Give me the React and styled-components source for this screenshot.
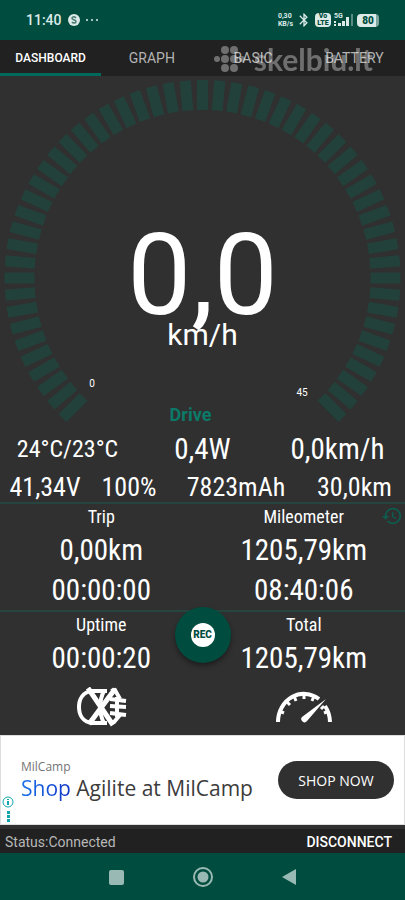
import React from "react";
import styled, { createGlobalStyle } from "styled-components";
import { MdHistory, MdBluetooth } from "react-icons/md";

const GlobalStyle = createGlobalStyle`
  * {
    box-sizing: border-box;
  }

  body {
    margin: 0;
    background: #303030;
    font-family: Roboto, "Liberation Sans", sans-serif;
  }

  button {
    border: 0;
    padding: 0;
    background: none;
    font-family: inherit;
    cursor: pointer;
  }
`;

const Screen = styled.div`
  display: flex;
  flex-direction: column;
  min-height: 100vh;
  background: #303030;
  color: #ffffff;
`;

const StatusBar = styled.header`
  display: flex;
  align-items: center;
  justify-content: space-between;
  height: 40px;
  padding: 0 26px;
  background: #004d40;
  color: #dcebe8;
`;

const StatusGroup = styled.div`
  display: flex;
  align-items: center;
  gap: ${props => props.$gap}px;
`;

const Clock = styled.span`
  font-size: 14px;
  line-height: 20px;
  font-weight: 500;
`;

const NetSpeed = styled.span`
  display: flex;
  flex-direction: column;
  font-size: 7px;
  line-height: 8px;
  font-weight: 700;
`;

const Volte = styled.span`
  display: flex;
  flex-direction: column;
  align-items: center;
  width: 16px;
  border-radius: 4px;
  background: #dcebe8;
  color: #004d40;
  font-size: 7px;
  line-height: 7px;
  font-weight: 900;
`;

const Battery = styled.span`
  width: 22px;
  border-radius: 4px;
  background: linear-gradient(90deg, #dcebe8 85%, #7fa59f 85%);
  color: #004d40;
  font-size: 10px;
  line-height: 13px;
  font-weight: 900;
  text-align: center;
`;

const TabBar = styled.nav`
  position: relative;
  display: grid;
  grid-template-columns: repeat(4, 1fr);
  height: 36px;
  background: #212121;
`;

const Tab = styled.button`
  padding-top: 3px;
  border-bottom: 3px solid ${props => (props.$active ? "#00695c" : "transparent")};
  color: ${props => (props.$active ? "#ffffff" : "#b3b3b3")};
  font-size: ${props => (props.$active ? 12 : 14)}px;
  font-weight: ${props => (props.$active ? 500 : 400)};
`;

const Watermark = styled.div`
  position: absolute;
  right: 32px;
  top: 3px;
  display: flex;
  align-items: center;
  gap: 8px;
  color: #ffffff;
  opacity: 0.35;
  font-family: Lato, sans-serif;
  font-size: 30px;
  line-height: 32px;
  font-weight: 700;
  pointer-events: none;
`;

const GaugeBox = styled.section`
  display: grid;

  > * {
    grid-area: 1 / 1;
  }
`;

const Dial = styled.svg`
  display: block;
  width: 100%;
`;

const Reading = styled.div`
  display: flex;
  flex-direction: column;
  align-items: center;
  justify-content: flex-end;
`;

const Speed = styled.div`
  font-size: 114px;
  line-height: 86px;
`;

const SpeedUnit = styled.div`
  margin-bottom: 52px;
  font-size: 30px;
  line-height: 34px;
`;

const Mode = styled.div`
  padding-right: 24px;
  color: #0b7a68;
  font-size: 18px;
  line-height: 22px;
  font-weight: 700;
`;

const Row = styled.div`
  display: grid;
  grid-template-columns: ${props => props.$columns};
  align-items: center;
`;

const Value = styled.div`
  font-family: "Roboto Condensed", "Liberation Sans Narrow", Roboto, sans-serif;
  font-size: 29px;
  line-height: 40px;
  text-align: center;
  white-space: nowrap;
`;

const PowerValue = styled(Value)`
  font-size: ${props => (props.$small ? 24 : 29)}px;
  line-height: 46px;
`;

const BatteryValue = styled(Value)`
  font-size: 26px;
  line-height: 30px;
`;

const Label = styled(Value)`
  font-size: 18px;
  line-height: 26px;
`;

const Panel = styled.section`
  position: relative;
  display: grid;
  grid-template-columns: 1fr 1fr;
  border-top: 2px solid #25463f;
`;

const HistoryButton = styled.button`
  position: absolute;
  top: 1px;
  right: 2px;
  height: 22px;
  color: #0d5c4f;
  font-size: 22px;
  line-height: 22px;
`;

const RecButton = styled.button`
  position: absolute;
  top: -5px;
  left: calc(50% - 28px);
  display: grid;
  place-items: center;
  width: 56px;
  height: 56px;
  border-radius: 50%;
  background: #004d40;
  box-shadow: 0 3px 5px rgba(0, 0, 0, 0.4);
`;

const RecDot = styled.span`
  width: 24px;
  height: 24px;
  border-radius: 50%;
  background: #ffffff;
  color: #004d40;
  font-size: 10px;
  line-height: 24px;
  font-weight: 900;
`;

const IconButton = styled.button`
  display: grid;
  place-items: center;
  height: 57px;
  color: #ffffff;
`;

const Ad = styled.aside`
  position: relative;
  display: flex;
  align-items: center;
  justify-content: space-between;
  height: 90px;
  padding: 0 10px 0 20px;
  border: 1px solid #dddddd;
  background: #ffffff;
  font-family: "Open Sans", "Noto Sans", sans-serif;
`;

const AdText = styled.div`
  display: flex;
  flex-direction: column;
`;

const AdBrand = styled.span`
  color: #757575;
  font-size: 12px;
  line-height: 16px;
`;

const AdTitle = styled.a`
  color: #3c3c3c;
  font-size: 21px;
  line-height: 26px;
  text-decoration: none;
  white-space: nowrap;
`;

const AdAccent = styled.span`
  background: linear-gradient(90deg, #1a73e8, #1035c8);
  background-clip: text;
  color: transparent;
`;

const ShopButton = styled.button`
  width: 116px;
  height: 38px;
  border-radius: 19px;
  background: #303030;
  color: #ffffff;
  font-size: 14px;
`;

const AdChoices = styled.button`
  position: absolute;
  left: 0;
  bottom: 1px;
  height: 28px;
`;

const ConnectionBar = styled.footer`
  display: flex;
  align-items: center;
  justify-content: space-between;
  height: 28px;
  padding: 1px 13px 0 5px;
  border-top: 4px solid #303030;
  background: #212121;
  color: #b8b8b8;
  font-size: 14px;
`;

const Disconnect = styled.button`
  color: #ffffff;
  font-size: 14px;
  font-weight: 500;
`;

const NavBar = styled.nav`
  display: flex;
  align-items: center;
  justify-content: center;
  gap: 62px;
  flex: 1;
  min-height: 47px;
  background: #004d40;
`;

const NavButton = styled.button`
  width: 24px;
  height: 24px;

  svg {
    display: block;
  }
`;

const TABS = ["DASHBOARD", "GRAPH", "BASIC", "BATTERY"];
const BAR_COUNT = 55;
const bars = Array.from({ length: BAR_COUNT }, (_, i) => -135 + i * 5);

const Gauge = () => (
  <GaugeBox>
    <Dial viewBox="0 0 405 350" aria-hidden="true">
      {bars.map(angle => (
        <rect
          key={angle}
          x="197"
          y="4"
          width="11"
          height="30"
          fill="#23413b"
          transform={`rotate(${angle} 202.5 202)`}
        />
      ))}
      <g fill="#ffffff" fontSize="10" textAnchor="middle">
        <text x="92" y="311">0</text>
        <text x="302" y="320">45</text>
      </g>
    </Dial>
    <Reading>
      <Speed>0,0</Speed>
      <SpeedUnit>km/h</SpeedUnit>
      <Mode>Drive</Mode>
    </Reading>
  </GaugeBox>
);

const LightOffIcon = () => (
  <svg width="52" height="40" viewBox="0 0 52 40" fill="none" stroke="currentColor" strokeWidth="4">
    <path d="M32 4H17C8 5 4 12 4 20s4 15 13 16h15" />
    <path d="M29 4c-5 9-5 23 0 32" />
    <path d="M13 1l25 37M40 2L14 37" strokeWidth="5" />
    <path d="M36 4l4-1 5 9M36 36l3-1 6-7" />
    <path d="M42 10v20" />
    <path d="M35 12l16 2M35 19l16 1M35 26l16 2" strokeWidth="4" />
  </svg>
);

const SpeedometerIcon = () => (
  <svg width="56" height="32" viewBox="0 0 56 32" fill="none" stroke="currentColor">
    <path d="M2 31A26 28 0 0 1 43 8M49 15A26 28 0 0 1 54 31" strokeWidth="4" />
    <path
      d="M3 20l5 2M10 10l4 4M18 5l2 5M28 2v6M38 5l-2 5M53 20l-5 2M48 15l-3 3"
      strokeWidth="3"
    />
    <path d="M50 8L31 30a3 3 0 0 1-5-4z" fill="currentColor" stroke="none" />
  </svg>
);

const SignalIcon = () => (
  <svg width="20" height="16" viewBox="0 0 20 16" fill="currentColor">
    <text x="0" y="6" fontSize="7" fontWeight="700">5G</text>
    <path d="M0 9h2v2H0zM0 12h2v2H0zM4 11h3v3H4zM8 9h3v5H8zM12 5h3v9h-3z" />
    <path d="M17 2h2v12h-2z" opacity="0.4" />
  </svg>
);

const App = () => (
  <Screen>
    <GlobalStyle />
    <StatusBar>
      <StatusGroup $gap={6}>
        <Clock>11:40</Clock>
        <svg width="12" height="12" viewBox="0 0 12 12">
          <circle cx="6" cy="6" r="6" fill="#dcebe8" />
          <path d="M8 4C6 2 4 3 4 4.500s4 1 4 3-3 2-4 .5" fill="none" stroke="#47786f" strokeWidth="1.500" />
        </svg>
        <svg width="12" height="4" viewBox="0 0 12 4" fill="#dcebe8">
          <circle cx="1" cy="2" r="1" />
          <circle cx="6" cy="2" r="1" />
          <circle cx="11" cy="2" r="1" />
        </svg>
      </StatusGroup>
      <StatusGroup $gap={3}>
        <NetSpeed>
          <span>0,30</span>
          <span>KB/s</span>
        </NetSpeed>
        <MdBluetooth size={16} />
        <Volte>
          <span>Vo</span>
          <span>LTE</span>
        </Volte>
        <SignalIcon />
        <Battery>80</Battery>
      </StatusGroup>
    </StatusBar>

    <TabBar>
      {TABS.map((tab, i) => (
        <Tab key={tab} $active={i === 0}>
          {tab}
        </Tab>
      ))}
      <Watermark>
        <svg width="33" height="26" viewBox="0 0 33 26" fill="currentColor">
          <circle cx="4" cy="13" r="3" />
          {[12, 21].map(x => [4, 13, 22].map(y => <circle key={`${x}-${y}`} cx={x} cy={y} r="4" />))}
          <circle cx="29" cy="13" r="3" />
        </svg>
        <span>skelbiu.lt</span>
      </Watermark>
    </TabBar>

    <Gauge />

    <Row $columns="1fr 1fr 1fr">
      <PowerValue $small>24°C/23°C</PowerValue>
      <PowerValue>0,4W</PowerValue>
      <PowerValue>0,0km/h</PowerValue>
    </Row>
    <Row $columns="90fr 78fr 136fr 101fr">
      <BatteryValue>41,34V</BatteryValue>
      <BatteryValue>100%</BatteryValue>
      <BatteryValue>7823mAh</BatteryValue>
      <BatteryValue>30,0km</BatteryValue>
    </Row>

    <Panel>
      <Label>Trip</Label>
      <Label>Mileometer</Label>
      <Value>0,00km</Value>
      <Value>1205,79km</Value>
      <Value>00:00:00</Value>
      <Value>08:40:06</Value>
      <HistoryButton aria-label="History">
        <MdHistory />
      </HistoryButton>
    </Panel>

    <Panel>
      <Label>Uptime</Label>
      <Label>Total</Label>
      <Value>00:00:20</Value>
      <Value>1205,79km</Value>
      <IconButton aria-label="Headlight">
        <LightOffIcon />
      </IconButton>
      <IconButton aria-label="Speed mode">
        <SpeedometerIcon />
      </IconButton>
      <RecButton>
        <RecDot>REC</RecDot>
      </RecButton>
    </Panel>

    <Ad>
      <AdText>
        <AdBrand>MilCamp</AdBrand>
        <AdTitle href="#">
          <AdAccent>Shop</AdAccent> Agilite at MilCamp
        </AdTitle>
      </AdText>
      <ShopButton>SHOP NOW</ShopButton>
      <AdChoices aria-label="Ad choices">
        <svg width="14" height="28" viewBox="0 0 14 28" fill="#12a5b0">
          <circle cx="7" cy="7" r="5" fill="none" stroke="#12a5b0" />
          <path d="M6 4h2v1H6zM6 6h2v4H6zM6 16h3v3H6zM6 20h3v3H6zM6 24h3v3H6z" />
        </svg>
      </AdChoices>
    </Ad>

    <ConnectionBar>
      <span>Status:Connected</span>
      <Disconnect>DISCONNECT</Disconnect>
    </ConnectionBar>

    <NavBar>
      <NavButton aria-label="Recent apps">
        <svg width="24" height="24" viewBox="0 0 24 24">
          <rect x="4" y="5" width="15" height="15" rx="2" fill="#99bab4" />
        </svg>
      </NavButton>
      <NavButton aria-label="Home">
        <svg width="24" height="24" viewBox="0 0 24 24">
          <circle cx="12" cy="12" r="9" fill="none" stroke="#99bab4" strokeWidth="2" />
          <circle cx="12" cy="12" r="5.500" fill="#99bab4" />
        </svg>
      </NavButton>
      <NavButton aria-label="Back">
        <svg width="24" height="24" viewBox="0 0 24 24">
          <path d="M5 12L19 4v16z" fill="#99bab4" />
        </svg>
      </NavButton>
    </NavBar>
  </Screen>
);

export default App;
